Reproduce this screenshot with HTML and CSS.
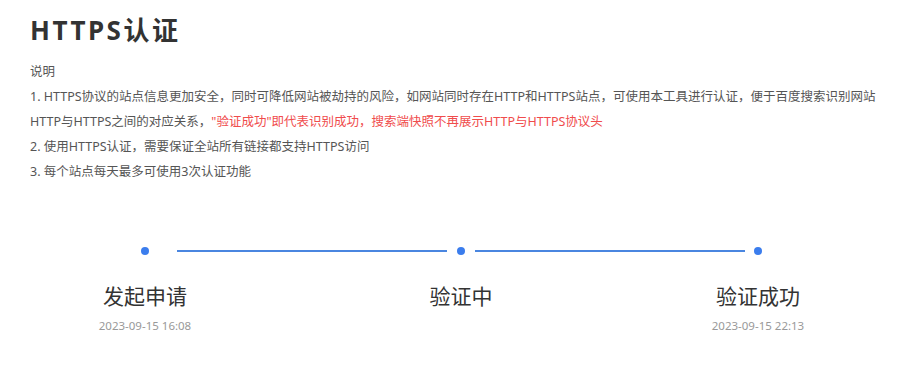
FILE: index.html
```html
<!DOCTYPE html>
<html lang="zh-CN">
<head>
<meta charset="utf-8">
<title>HTTPS认证</title>
<link rel="stylesheet" href="styles.css">
</head>
<body>
<div class="page">
  <h1 class="title">HTTPS认证</h1>
  <div class="desc">
    <p>说明</p>
    <p>1. HTTPS协议的站点信息更加安全，同时可降低网站被劫持的风险，如网站同时存在HTTP和HTTPS站点，可使用本工具进行认证，便于百度搜索识别网站</p>
    <p>HTTP与HTTPS之间的对应关系，<span class="warn">"验证成功"即代表识别成功，搜索端快照不再展示HTTP与HTTPS协议头</span></p>
    <p>2. 使用HTTPS认证，需要保证全站所有链接都支持HTTPS访问</p>
    <p>3. 每个站点每天最多可使用3次认证功能</p>
  </div>
  <div class="track">
    <span class="dot"></span>
    <span class="line line-a"></span>
    <span class="dot"></span>
    <span class="line line-b"></span>
    <span class="dot"></span>
  </div>
  <div class="steps">
    <div class="step step-1">
      <div class="step-name">发起申请</div>
      <div class="step-time">2023-09-15 16:08</div>
    </div>
    <div class="step step-2">
      <div class="step-name">验证中</div>
      <div class="step-time"></div>
    </div>
    <div class="step step-3">
      <div class="step-name">验证成功</div>
      <div class="step-time">2023-09-15 22:13</div>
    </div>
  </div>
</div>
</body>
</html>
```
FILE: styles.css
```css
html, body {
  margin: 0;
  padding: 0;
  background: #ffffff;
}
body {
  font-family: "Noto Sans", "Noto Sans CJK SC", sans-serif;
  color: #555555;
}
.page {
  padding: 12px 30px 0 30px;
}
.title {
  margin: 0;
  font-size: 26px;
  line-height: 36px;
  font-weight: 700;
  color: #333333;
  letter-spacing: 2.5px;
}
.desc {
  margin-top: 11px;
}
.desc p {
  margin: 0;
  font-size: 12.5px;
  line-height: 25px;
  color: #555555;
  white-space: nowrap;
}
.warn {
  color: #f04c4c;
}
.track {
  display: flex;
  align-items: center;
  height: 8px;
  margin-top: 63px;
  padding-left: 111px;
}
.dot {
  width: 8px;
  height: 8px;
  border-radius: 50%;
  background: #3b7ded;
  flex: none;
}
.line {
  height: 2px;
  width: 270px;
  background: #4a86e0;
  flex: none;
}
.line-a {
  margin: 0 10px 0 28px;
}
.line-b {
  margin: 0 9px 0 10px;
}
.steps {
  display: flex;
  margin-top: 26px;
}
.step {
  width: 160px;
  text-align: center;
  flex: none;
}
.step-1 { margin-left: 35px; }
.step-2 { margin-left: 156px; }
.step-3 { margin-left: 137px; }
.step-name {
  font-size: 21px;
  line-height: 30px;
  color: #333333;
}
.step-time {
  margin-top: 5px;
  font-size: 11.5px;
  line-height: 20px;
  color: #999999;
}
```
